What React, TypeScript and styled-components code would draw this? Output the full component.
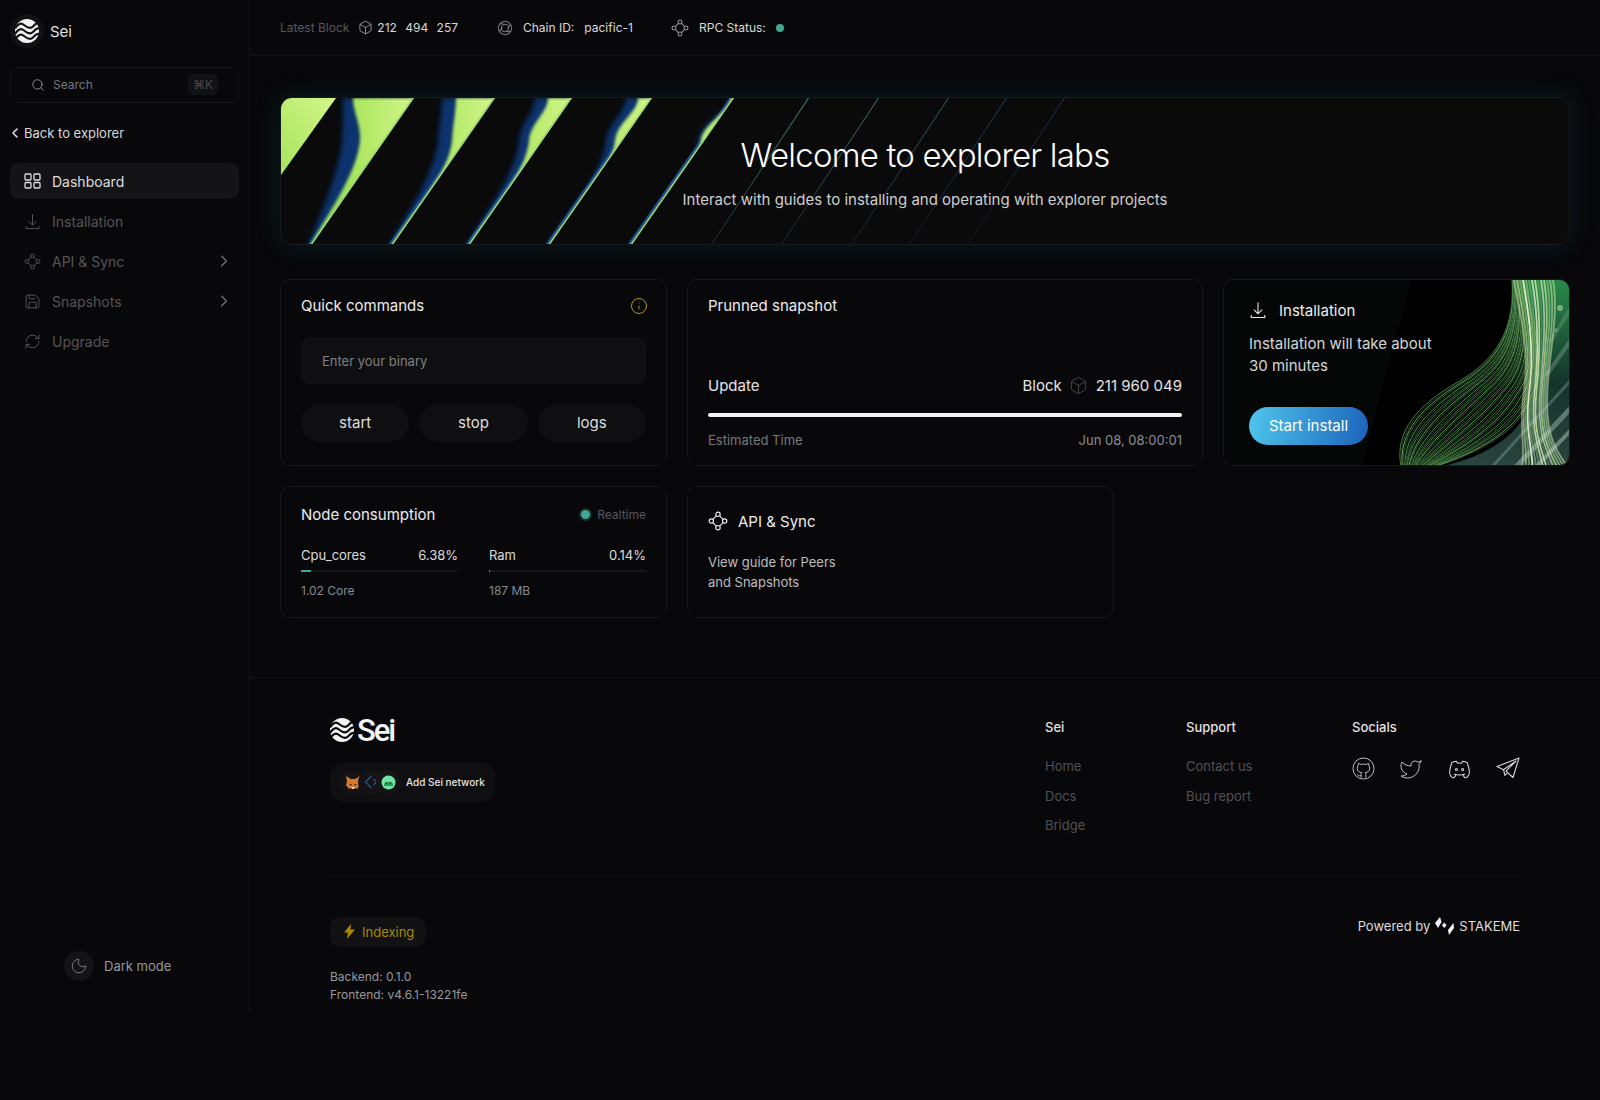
import React from "react";
import styled, { createGlobalStyle } from "styled-components";
import { Box, ChevronLeft, ChevronRight, Info, Moon, RefreshCw, Save, Search, Twitter } from "lucide-react";
import { TbBrandDiscord } from "react-icons/tb";

const GlobalStyle = createGlobalStyle`
  html, body {
    margin: 0;
    background: #08080b;
    color: #e6e6e6;
    font-family: Inter, "Liberation Sans", sans-serif;
  }
  * { box-sizing: border-box; }
`;

const Layout = styled.div`
  display: flex;
  width: 1600px;
`;

/* sidebar */
const Sidebar = styled.aside`
  width: 250px;
  flex-shrink: 0;
  display: flex;
  flex-direction: column;
  padding: 14px 10px 32px;
  border-right: 1px solid #131316;
`;
const Brand = styled.div`
  display: flex;
  align-items: center;
  gap: 6px;
  height: 34px;
  font-size: 15px;
  color: #e2e2e2;
`;
const LogoRound = styled.div`
  width: 34px;
  height: 34px;
  border-radius: 50%;
  background: #121215;
  display: flex;
  align-items: center;
  justify-content: center;
`;
const SearchBox = styled.div`
  margin-top: 19px;
  height: 36px;
  width: 229px;
  border: 1px solid #151518;
  border-radius: 8px;
  display: flex;
  align-items: center;
  padding: 0 20px;
  gap: 8px;
  font-size: 12px;
  line-height: 32px;
  color: #77777c;
  span { margin-top: -1px; }
`;
const Kbd = styled.span`
  margin-left: auto;
  width: 30px;
  height: 21px;
  border-radius: 5px;
  background: #121215;
  color: #47474c;
  font-size: 12px;
  display: flex;
  align-items: center;
  justify-content: center;
`;
const BackLink = styled.div`
  margin: 21px 0 21px 0;
  height: 18px;
  display: flex;
  align-items: center;
  font-size: 13px;
  color: #d8d8d8;
  svg { margin: 0 1.5px 0 -3.5px; }
`;
const Nav = styled.nav`
  display: flex;
  flex-direction: column;
  gap: 4px;
`;
const NavItem = styled.div<{ $active?: boolean }>`
  width: 229px;
  height: 36px;
  padding: 0 5px 0 14px;
  border-radius: 8px;
  display: flex;
  align-items: center;
  gap: 11px;
  font-size: 14px;
  color: ${(p) => (p.$active ? "#dddddd" : "#545458")};
  background: ${(p) => (p.$active ? "#141416" : "transparent")};
  svg.arrow { margin-left: auto; color: #77777c; }
`;
const ThemeToggle = styled.div`
  margin-top: auto;
  margin-left: 54px;
  display: flex;
  align-items: center;
  gap: 10px;
  font-size: 13px;
  color: #99999c;
`;
const MoonRound = styled.div`
  width: 30px;
  height: 30px;
  border-radius: 50%;
  background: #141416;
  display: flex;
  align-items: center;
  justify-content: center;
  color: #8a8a8d;
`;

/* top bar */
const Main = styled.div`
  flex: 1;
  min-width: 0;
`;
const TopBar = styled.header`
  height: 56px;
  padding: 0 30px;
  border-bottom: 1px solid #121215;
  display: flex;
  align-items: center;
  font-size: 12px;
  color: #d8d8d8;
`;
const BarGroup = styled.div<{ $gap: number; $width?: number }>`
  display: flex;
  align-items: center;
  gap: ${(p) => p.$gap}px;
  width: ${(p) => (p.$width ? `${p.$width}px` : "auto")};
`;
const Muted = styled.span`
  color: #56565b;
`;
const BlockNum = styled.span`
  word-spacing: 5px;
  margin-left: -5px;
`;
const HubWrap = styled.span`
  display: flex;
  color: #9a9a9d;
`;
const StatusDot = styled.span<{ $size: number; $glow?: boolean }>`
  width: ${(p) => p.$size}px;
  height: ${(p) => p.$size}px;
  border-radius: 50%;
  background: #3fa893;
  box-shadow: ${(p) => (p.$glow ? "0 0 0 2px rgba(63,168,147,.25)" : "none")};
`;

/* content */
const Content = styled.main`
  padding: 41px 30px 59px;
`;
const Banner = styled.section`
  position: relative;
  overflow: hidden;
  height: 148px;
  border: 1px solid #191a1c;
  border-radius: 12px;
  background: #0a0a0b;
  box-shadow: 0 0 26px rgba(0, 110, 120, 0.2);
  display: flex;
  flex-direction: column;
  align-items: center;
  text-align: center;
`;
const BannerArt = styled.svg`
  position: absolute;
  inset: 0;
`;
const BannerTitle = styled.h1`
  position: relative;
  margin: 35px 0 0;
  font-size: 33px;
  line-height: 44px;
  font-weight: 300;
  color: #fff;
  letter-spacing: -0.8px;
`;
const BannerSub = styled.p`
  position: relative;
  margin: 11.5px 0 0;
  font-size: 15px;
  line-height: 22px;
  color: #cfcfcf;
`;
const CardRow = styled.div<{ $columns: string; $top: number }>`
  display: grid;
  grid-template-columns: ${(p) => p.$columns};
  gap: 20px;
  margin-top: ${(p) => p.$top}px;
`;
const Card = styled.div<{ $height: number; $pad?: number }>`
  height: ${(p) => p.$height}px;
  border: 1px solid #18181b;
  border-radius: 10px;
  padding: ${(p) => p.$pad ?? 15.5}px 20px 0;
  display: flex;
  flex-direction: column;
`;
const CardHead = styled.div`
  display: flex;
  align-items: center;
  justify-content: space-between;
  height: 20px;
  svg { margin-right: -2px; }
`;
const CardTitle = styled.div`
  font-size: 15px;
  font-weight: 400;
  color: #ececec;
`;
const BinaryInput = styled.div`
  margin-top: 22.5px;
  height: 46px;
  border-radius: 8px;
  border: 1px solid #121215;
  background: #0f0f11;
  display: flex;
  align-items: center;
  padding: 0 20px;
  font-size: 13px;
  color: #808084;
`;
const CommandRow = styled.div`
  margin-top: 20px;
  display: grid;
  grid-template-columns: repeat(3, 1fr);
  gap: 10px;
`;
const CommandButton = styled.div`
  height: 38px;
  padding-bottom: 1.5px;
  border-radius: 19px;
  background: #0f0f11;
  font-size: 15px;
  color: #dedede;
  display: flex;
  align-items: center;
  justify-content: center;
`;
const UpdateRow = styled.div`
  margin-top: 58.5px;
  height: 22px;
  display: flex;
  align-items: center;
  justify-content: space-between;
  font-size: 15px;
  color: #e4e4e4;
`;
const BlockInfo = styled.div`
  display: flex;
  align-items: center;
  gap: 7.5px;
  svg { color: #55555a; }
`;
const FullBar = styled.div`
  margin-top: 17px;
  height: 4px;
  border-radius: 2px;
  background: #f4f4f4;
`;
const EstimateRow = styled.div`
  margin-top: 14px;
  display: flex;
  justify-content: space-between;
  font-size: 13px;
  line-height: 18px;
  color: #77777c;
  span:last-child { color: #8d8d90; }
`;
const Realtime = styled.div`
  display: flex;
  align-items: center;
  gap: 7px;
  font-size: 12px;
  color: #56565b;
`;
const UsageGrid = styled.div`
  margin-top: 22px;
  display: grid;
  grid-template-columns: 157px 157px;
  justify-content: space-between;
`;
const UsageHead = styled.div`
  display: flex;
  justify-content: space-between;
  font-size: 13px;
  line-height: 18px;
  color: #dcdcdc;
`;
const UsageTrack = styled.div`
  margin-top: 6px;
  height: 2px;
  background: #151518;
`;
const UsageFill = styled.div`
  height: 100%;
  background: #3fa893;
`;
const UsageSub = styled.div`
  margin-top: 10px;
  font-size: 12px;
  line-height: 18px;
  color: #88888c;
`;
const ApiHead = styled.div`
  margin-top: 8.5px;
  display: flex;
  align-items: center;
  gap: 10px;
  font-size: 15px;
  font-weight: 400;
  color: #ececec;
`;
const ApiText = styled.p`
  margin: 22px 0 0;
  font-size: 13px;
  line-height: 19.5px;
  color: #bdbdbd;
`;
const InstallCard = styled(Card)`
  position: relative;
  overflow: hidden;
  padding: 18px 25px 0;
  background: #050706;
`;
const InstallArt = styled.svg`
  position: absolute;
  inset: 0;
`;
const InstallHead = styled.div`
  position: relative;
  display: flex;
  align-items: center;
  gap: 12px;
  height: 24px;
  font-size: 15px;
  font-weight: 400;
  color: #eeeeee;
`;
const InstallText = styled.p`
  position: relative;
  margin: 11px 0 0;
  width: 190px;
  font-size: 15px;
  line-height: 22px;
  color: #d6d6d6;
`;
const StartButton = styled.div`
  position: relative;
  margin-top: 30px;
  width: 119px;
  height: 38px;
  padding-bottom: 1.5px;
  border-radius: 19px;
  background: linear-gradient(100deg, #4ec6ec 0%, #1c63bb 100%);
  display: flex;
  align-items: center;
  justify-content: center;
  font-size: 15px;
  color: #fff;
`;

/* footer */
const Footer = styled.footer`
  border-top: 1px solid #121215;
  padding: 0 80px 9px;
`;
const FooterTop = styled.div`
  display: flex;
  justify-content: space-between;
  padding: 40px 0 30px;
  border-bottom: 1px solid #121215;
`;
const FooterBrand = styled.div`
  display: flex;
  flex-direction: column;
  align-items: flex-start;
`;
const WordMark = styled.div`
  display: flex;
  align-items: center;
  gap: 3px;
  height: 24px;
  font-family: Roboto, sans-serif;
  font-size: 31px;
  font-weight: 500;
  letter-spacing: -2px;
  color: #f4f4f4;
`;
const NetworkBadge = styled.div`
  margin-top: 20px;
  width: 165px;
  height: 40px;
  border-radius: 14px;
  background: #0f0f11;
  display: flex;
  align-items: center;
  padding: 0 10px;
  font-size: 10px;
  font-weight: 500;
  color: #e2e2e2;
  white-space: nowrap;
`;
const WalletIcon = styled.div`
  width: 25px;
  height: 25px;
  border-radius: 50%;
  background: #141416;
  margin-right: -7px;
  flex-shrink: 0;
  display: flex;
  align-items: center;
  justify-content: center;
`;
const BadgeLabel = styled.span`
  margin-left: 12px;
`;
const FooterCols = styled.div`
  display: grid;
  grid-template-columns: 141px 166px 168px;
`;
const FooterTitle = styled.div`
  font-size: 13px;
  line-height: 18px;
  font-weight: 500;
  color: #e2e2e2;
  margin-bottom: 21px;
`;
const FooterLink = styled.div`
  font-size: 13px;
  line-height: 18px;
  margin-bottom: 11.5px;
  color: #505055;
`;
const SocialRow = styled.div`
  display: flex;
  justify-content: space-between;
  color: #d8d8d8;
`;
const FooterBottom = styled.div`
  padding-top: 40px;
  display: flex;
  justify-content: space-between;
  align-items: flex-start;
`;
const IndexBadge = styled.div`
  width: 96px;
  height: 30px;
  border-radius: 10px;
  background: #121215;
  display: flex;
  align-items: center;
  gap: 7px;
  padding-left: 14px;
  font-size: 13px;
  color: #a68a00;
`;
const Versions = styled.div`
  margin-top: 21px;
  font-size: 12px;
  line-height: 18px;
  color: #98989c;
`;
const Powered = styled.div`
  display: flex;
  align-items: center;
  gap: 5px;
  font-size: 13px;
  line-height: 18px;
  color: #dedede;
`;

/* drawings */
const SeiLogo = ({ size, bg }: { size: number; bg: string }) => (
  <svg width={size} height={size} viewBox="0 0 24 24">
    <circle cx="12" cy="12" r="12" fill="#f2f2f2" />
    <g fill="none" stroke={bg} strokeWidth="2.1">
      <path d="M0 9.5C3 4.5 6 3.5 9 6S15 10.5 18 7.5 22 3.5 24 4" />
      <path d="M0 15C3 10 6 9 9 11.5S15 16 18 13 22 9 24 9.500" />
      <path d="M0 20.5C3 15.500 6 14.500 9 17S15 21.500 18 18.500 22 14.500 24 15" />
    </g>
  </svg>
);

const GridIcon = () => (
  <svg width="17" height="16" viewBox="0 0 17 16" fill="none" stroke="currentColor" strokeWidth="1.3">
    <rect x="1" y="1" width="6" height="6" rx="1" />
    <rect x="10" y="1" width="6" height="6" rx="1" />
    <rect x="1" y="9.5" width="6" height="5.5" rx="1" />
    <rect x="10" y="9.5" width="6" height="5.5" rx="1" />
  </svg>
);

const HubIcon = ({ size, stroke = 1.4 }: { size: number; stroke?: number }) => (
  <svg width={size} height={size} viewBox="0 0 24 24" fill="none" stroke="currentColor" strokeWidth={stroke}>
    <circle cx="12" cy="4" r="2.6" />
    <circle cx="4" cy="12" r="2.6" />
    <circle cx="20" cy="12" r="2.6" />
    <circle cx="12" cy="20" r="2.6" />
    <path d="M10 5.8 5.8 10M14 5.8 18.2 10M5.8 14 10 18.2M18.2 14 14 18.2" />
  </svg>
);

const DownloadIcon = ({ size, stroke = 1.4 }: { size: number; stroke?: number }) => (
  <svg width={size} height={size} viewBox="0 0 24 24" fill="none" stroke="currentColor" strokeWidth={stroke}>
    <path d="M12 2v15M6.5 11.5 12 17l5.5-5.5M3 18.5V22h18v-3.5" />
  </svg>
);

const ChainIcon = () => (
  <svg width="16" height="16" viewBox="0 0 24 24" fill="none" stroke="#77777c" strokeWidth="1.6">
    <circle cx="12" cy="12" r="10" />
    <circle cx="12" cy="12" r="5.5" />
    <path d="M4 6c4-1 6 0 8 1M20 6c-1 4-3 5-4 7M21 17c-4 1-6 0-8-1M4 18c1-4 3-5 4-7" />
  </svg>
);

const TelegramIcon = () => (
  <svg width="24" height="22" viewBox="0 0 24 22" fill="none" stroke="currentColor" strokeWidth="1.1" strokeLinejoin="round">
    <path d="M23 1 1 9.5l6.5 3.2L20 4 10 14.2l7 6.3L23 1Z" />
    <path d="M7.5 12.7 9 18.5l2.6-3" />
  </svg>
);

const GithubRound = () => (
  <svg width="23" height="23" viewBox="0 0 24 24" fill="none" stroke="currentColor" strokeWidth="0.9">
    <circle cx="12" cy="12" r="11" />
    <path d="M9.5 21.5v-3.2c0-1 .2-1.5.7-2-2.6-.3-4.7-1.3-4.7-4.6 0-1 .4-1.9 1-2.6-.2-.6-.2-1.5.1-2.4 1 0 1.9.5 2.7 1.1a9 9 0 0 1 5.4 0c.8-.6 1.7-1.1 2.7-1.1.3.9.3 1.8.1 2.4.6.7 1 1.6 1 2.6 0 3.3-2.1 4.3-4.7 4.6.5.5.7 1.1.7 2v3.2" />
    <path d="M9.5 19.5c-2.5.7-3.3-.8-4.2-1.7" />
  </svg>
);

const FoxIcon = () => (
  <svg width="16" height="15" viewBox="0 0 16 15">
    <path d="M1 1 6 4h4l5-3-1 5 1 4-3 4-2-1H6l-2 1-3-4 1-4-1-5Z" fill="#d97826" />
    <path d="M4 9h3l-1 2-2-2Zm5 0h3l-2 2-1-2Z" fill="#33302c" />
    <path d="M6 12h4l-1 2H7l-1-2Z" fill="#e8d9c8" />
  </svg>
);

const DiamondIcon = () => (
  <svg width="14" height="14" viewBox="0 0 14 14" fill="none" stroke="#27528f" strokeWidth="1.4">
    <path d="M7.5 1 1.5 7 7.5 13M9.5 4 12.5 7 9.5 10" />
  </svg>
);

const SlimeIcon = () => (
  <svg width="15" height="15" viewBox="0 0 15 15">
    <circle cx="7.5" cy="7.5" r="7" fill="#6fe3a0" />
    <path d="M3 9c1-3 8-3 9 0v2H3Z" fill="#2f9c62" />
    <circle cx="5.5" cy="8" r="0.8" fill="#0d2b1b" />
    <circle cx="9.5" cy="8" r="0.8" fill="#0d2b1b" />
  </svg>
);

const BoltIcon = () => (
  <svg width="11" height="15" viewBox="0 0 11 15" fill="#a68a00">
    <path d="M7 0 0 8.5h4L3 15l8-9.5H6.5L7 0Z" />
  </svg>
);

const StakemeLogo = () => (
  <svg width="19" height="18" viewBox="0 0 19 18" fill="#f0f0f0">
    <path d="M5 0 6.5 5 3 11 0 6 5 0Z" />
    <path d="M9 5.5 11.5 8 9.5 11 7 8.5 9 5.5Z" />
    <path d="M18.5 6 19 11 14 18 13 13 18.5 6Z" />
  </svg>
);

const SKEW = 103;
const stripes = [
  { r: 133, gl: 72, gm: 79, bl: 62, bm: 61 },
  { r: 214, gl: 175, gm: 171, bl: 161, bm: 157 },
  { r: 291, gl: 267, gm: 248, bl: 254, bm: 238 },
  { r: 371, gl: 357, gm: 334, bl: 345, bm: 325 },
  { r: 453, gl: 450, gm: 420, bl: 448, bm: 417 },
];
const faintLines = [
  { x: 527, top: "#4f938b", bottom: "#1a2838" },
  { x: 597, top: "#40767a", bottom: "#182433" },
  { x: 667, top: "#335f6a", bottom: "#151f2c" },
  { x: 725, top: "#24405a", bottom: "#121a26" },
  { x: 783, top: "#1e3550", bottom: "#10161f" },
];

const edgePath = (r: number, top: number, mid: number, overshoot: number) => {
  const tip = r - SKEW;
  return `M${r} 0L${tip} 148L${tip - overshoot} 148C${tip + (mid - tip) * 0.35} 112 ${mid - 4} 78 ${mid} 43C${mid + 1} 26 ${top} 14 ${top} 0Z`;
};

const BannerDrawing = () => (
  <BannerArt width="1288" height="146" viewBox="0 0 1288 146" preserveAspectRatio="xMinYMin slice">
    <defs>
      <linearGradient id="lime" x1="0" x2="1" y1="0" y2="0">
        <stop offset="0" stopColor="#7ed848" />
        <stop offset="0.5" stopColor="#b0e864" />
        <stop offset="1" stopColor="#d3f68a" />
      </linearGradient>
      <linearGradient id="lime-first" x1="0" x2="1" y1="1" y2="0">
        <stop offset="0" stopColor="#a6e45c" />
        <stop offset="1" stopColor="#d3f68a" />
      </linearGradient>
      <filter id="soft-blue" x="-50%" width="200%">
        <feGaussianBlur stdDeviation="2.4" />
      </filter>
      <filter id="soft-green" x="-30%" width="160%">
        <feGaussianBlur stdDeviation="1.5" />
      </filter>
      {stripes.map((s) => (
        <clipPath id={`cut-${s.r}`} key={s.r}>
          <path d={`M${s.r} 0L${s.r - SKEW} 148L${s.r - SKEW - 160} 148L${s.r - 160} 0Z`} />
        </clipPath>
      ))}
      {faintLines.map((l) => (
        <linearGradient id={`fade-${l.x}`} key={l.x} x1="0" x2="0" y1="0" y2="1">
          <stop offset="0" stopColor={l.top} />
          <stop offset="1" stopColor={l.bottom} />
        </linearGradient>
      ))}
    </defs>
    <path d="M0 0H55L0 77Z" fill="url(#lime-first)" />
    {stripes.map((s) => (
      <g clipPath={`url(#cut-${s.r})`} key={s.r}>
        <path d={edgePath(s.r, s.bl, s.bm, 3)} fill="#0c3a80" opacity="0.85" filter="url(#soft-blue)" />
        <path d={`M${s.r - 3} 0L${s.r - SKEW - 3} 148`} stroke="#1f4f90" strokeWidth="2.5" />
        <path d={edgePath(s.r + 1, s.gl, s.gm, 1)} fill="url(#lime)" filter="url(#soft-green)" />
        <path d={`M${s.r} 0L${s.r - SKEW} 148`} stroke="#9fdc6a" strokeWidth="3" />
      </g>
    ))}
    {faintLines.map((l) => (
      <path key={l.x} d={`M${l.x} 0L${l.x - 98} 148L${l.x - 97} 148L${l.x + 1} 0Z`} fill={`url(#fade-${l.x})`} />
    ))}
  </BannerArt>
);

const strandColors = ["#5d9a4a", "#1f5236", "#8cc866", "#2f7a44", "#123826", "#6fb154", "#254f3a", "#47884c"];
const strands = Array.from({ length: 44 }, (_, i) => {
  const t = i / 43;
  const lerp = (a: number, b: number) => (a + (b - a) * t).toFixed(1);
  return {
    d: `M${lerp(177, 210)} 187C${lerp(170, 258)} ${lerp(150, 172)} ${lerp(195, 295)} ${lerp(125, 150)} ${lerp(232, 308)} ${lerp(103, 118)}C${lerp(262, 322)} ${lerp(86, 95)} ${lerp(292, 316)} ${lerp(60, 60)} ${lerp(288, 300)} 0`,
    color: strandColors[i % strandColors.length],
  };
});
const ribbon = Array.from({ length: 14 }, (_, i) => ({
  d: `M${290 + i * 3} 0C${296 + i * 3} 35 ${306 + i * 1.5} 70 ${300 + i * 1.8} 110S${302 + i * 2} 165 ${298 + i * 3.5} 187`,
  color: i % 3 === 0 ? "#eef8d8" : i % 3 === 1 ? "#bfe59a" : "#74b46e",
  opacity: 0.45 + (i % 4) * 0.15,
}));
const streaks = [
  { d: "M347 128L292 187", w: 5, o: 0.4 },
  { d: "M347 150L312 187", w: 4, o: 0.45 },
  { d: "M347 100L268 187", w: 3, o: 0.25 },
  { d: "M347 60L322 96", w: 4, o: 0.25 },
  { d: "M347 28L326 62", w: 4, o: 0.18 },
];

const InstallDrawing = () => (
  <InstallArt width="345" height="185" viewBox="0 0 345 185" preserveAspectRatio="xMinYMin slice">
    <defs>
      <linearGradient id="wash" x1="0" x2="0" y1="0" y2="1">
        <stop offset="0" stopColor="#2a8a4a" />
        <stop offset="0.55" stopColor="#14342c" />
        <stop offset="1" stopColor="#2a443e" />
      </linearGradient>
      <filter id="haze">
        <feGaussianBlur stdDeviation="0.7" />
      </filter>
    </defs>
    <path d="M187 0H345V185H138Z" fill="#000" />
    <path d="M292 0H347V187H215C270 175 300 150 308 118 316 80 300 40 292 0Z" fill="url(#wash)" />
    <g fill="none" strokeWidth="0.8">
      {strands.map((s, i) => (
        <path key={i} d={s.d} stroke={s.color} />
      ))}
    </g>
    <g fill="none" strokeWidth="1.8" filter="url(#haze)">
      {ribbon.map((s, i) => (
        <path key={i} d={s.d} stroke={s.color} opacity={s.opacity} />
      ))}
      {streaks.map((s, i) => (
        <path key={i} d={s.d} stroke="#c6d8cf" strokeWidth={s.w} opacity={s.o} />
      ))}
    </g>
    <circle cx="336" cy="28" r="3" fill="#a8c88a" opacity="0.7" />
    <circle cx="332" cy="50" r="2" fill="#8cb070" opacity="0.5" />
  </InstallArt>
);

function App() {
  return (
    <Layout>
      <GlobalStyle />
      <Sidebar>
        <Brand>
          <LogoRound>
            <SeiLogo size={24} bg="#121215" />
          </LogoRound>
          Sei
        </Brand>
        <SearchBox>
          <Search size={14} strokeWidth={1.5} color="#9a9a9d" />
          <span>Search</span>
          <Kbd>⌘K</Kbd>
        </SearchBox>
        <BackLink>
          <ChevronLeft size={16} strokeWidth={2.4} color="#dddddd" />
          Back to explorer
        </BackLink>
        <Nav>
          <NavItem $active>
            <GridIcon />
            Dashboard
          </NavItem>
          <NavItem>
            <DownloadIcon size={17} />
            Installation
          </NavItem>
          <NavItem>
            <HubIcon size={17} />
            API &amp; Sync
            <ChevronRight className="arrow" size={20} strokeWidth={1.3} />
          </NavItem>
          <NavItem>
            <Save size={17} strokeWidth={1.4} />
            Snapshots
            <ChevronRight className="arrow" size={20} strokeWidth={1.3} />
          </NavItem>
          <NavItem>
            <RefreshCw size={17} strokeWidth={1.4} />
            Upgrade
          </NavItem>
        </Nav>
        <ThemeToggle>
          <MoonRound>
            <Moon size={18} strokeWidth={1.1} />
          </MoonRound>
          Dark mode
        </ThemeToggle>
      </Sidebar>
      <Main>
        <TopBar>
          <BarGroup $gap={9} $width={217}>
            <Muted>Latest Block</Muted>
            <Box size={15} strokeWidth={1.3} color="#b0aca5" />
            <BlockNum>212 494 257</BlockNum>
          </BarGroup>
          <BarGroup $gap={10} $width={174}>
            <ChainIcon />
            <span>Chain ID:</span>
            <span>pacific-1</span>
          </BarGroup>
          <BarGroup $gap={10}>
            <HubWrap>
              <HubIcon size={18} />
            </HubWrap>
            <span>RPC Status:</span>
            <StatusDot $size={8} />
          </BarGroup>
        </TopBar>
        <Content>
          <Banner>
            <BannerDrawing />
            <BannerTitle>Welcome to explorer labs</BannerTitle>
            <BannerSub>Interact with guides to installing and operating with explorer projects</BannerSub>
          </Banner>
          <CardRow $columns="387px 516px 347px" $top={34}>
            <Card $height={187}>
              <CardHead>
                <CardTitle>Quick commands</CardTitle>
                <Info size={18} strokeWidth={1.3} color="#b8960a" />
              </CardHead>
              <BinaryInput>Enter your binary</BinaryInput>
              <CommandRow>
                <CommandButton>start</CommandButton>
                <CommandButton>stop</CommandButton>
                <CommandButton>logs</CommandButton>
              </CommandRow>
            </Card>
            <Card $height={187}>
              <CardHead>
                <CardTitle>Prunned snapshot</CardTitle>
              </CardHead>
              <UpdateRow>
                <span>Update</span>
                <BlockInfo>
                  Block
                  <Box size={19} strokeWidth={1} />
                  211 960 049
                </BlockInfo>
              </UpdateRow>
              <FullBar />
              <EstimateRow>
                <span>Estimated Time</span>
                <span>Jun 08, 08:00:01</span>
              </EstimateRow>
            </Card>
            <InstallCard $height={187}>
              <InstallDrawing />
              <InstallHead>
                <DownloadIcon size={18} />
                Installation
              </InstallHead>
              <InstallText>Installation will take about 30 minutes</InstallText>
              <StartButton>Start install</StartButton>
            </InstallCard>
          </CardRow>
          <CardRow $columns="387px 427px" $top={20}>
            <Card $height={132} $pad={17}>
              <CardHead>
                <CardTitle>Node consumption</CardTitle>
                <Realtime>
                  <StatusDot $size={9} $glow />
                  Realtime
                </Realtime>
              </CardHead>
              <UsageGrid>
                <div>
                  <UsageHead>
                    <span>Cpu_cores</span>
                    <span>6.38%</span>
                  </UsageHead>
                  <UsageTrack>
                    <UsageFill style={{ width: "6.38%" }} />
                  </UsageTrack>
                  <UsageSub>1.02 Core</UsageSub>
                </div>
                <div>
                  <UsageHead>
                    <span>Ram</span>
                    <span>0.14%</span>
                  </UsageHead>
                  <UsageTrack>
                    <UsageFill style={{ width: "0.6%" }} />
                  </UsageTrack>
                  <UsageSub>187 MB</UsageSub>
                </div>
              </UsageGrid>
            </Card>
            <Card $height={132}>
              <ApiHead>
                <HubIcon size={20} />
                API &amp; Sync
              </ApiHead>
              <ApiText>
                View guide for Peers
                <br />
                and Snapshots
              </ApiText>
            </Card>
          </CardRow>
        </Content>
        <Footer>
          <FooterTop>
            <FooterBrand>
              <WordMark>
                <SeiLogo size={24} bg="#08080b" />
                Sei
              </WordMark>
              <NetworkBadge>
                <WalletIcon>
                  <FoxIcon />
                </WalletIcon>
                <WalletIcon>
                  <DiamondIcon />
                </WalletIcon>
                <WalletIcon>
                  <SlimeIcon />
                </WalletIcon>
                <BadgeLabel>Add Sei network</BadgeLabel>
              </NetworkBadge>
            </FooterBrand>
            <FooterCols>
              <div>
                <FooterTitle>Sei</FooterTitle>
                <FooterLink>Home</FooterLink>
                <FooterLink>Docs</FooterLink>
                <FooterLink>Bridge</FooterLink>
              </div>
              <div>
                <FooterTitle>Support</FooterTitle>
                <FooterLink>Contact us</FooterLink>
                <FooterLink>Bug report</FooterLink>
              </div>
              <div>
                <FooterTitle>Socials</FooterTitle>
                <SocialRow>
                  <GithubRound />
                  <Twitter size={24} strokeWidth={0.9} />
                  <TbBrandDiscord size={25} strokeWidth={1} />
                  <TelegramIcon />
                </SocialRow>
              </div>
            </FooterCols>
          </FooterTop>
          <FooterBottom>
            <div>
              <IndexBadge>
                <BoltIcon />
                Indexing
              </IndexBadge>
              <Versions>
                Backend: 0.1.0
                <br />
                Frontend: v4.6.1-13221fe
              </Versions>
            </div>
            <Powered>
              Powered by
              <StakemeLogo />
              STAKEME
            </Powered>
          </FooterBottom>
        </Footer>
      </Main>
    </Layout>
  );
}

export default App;
